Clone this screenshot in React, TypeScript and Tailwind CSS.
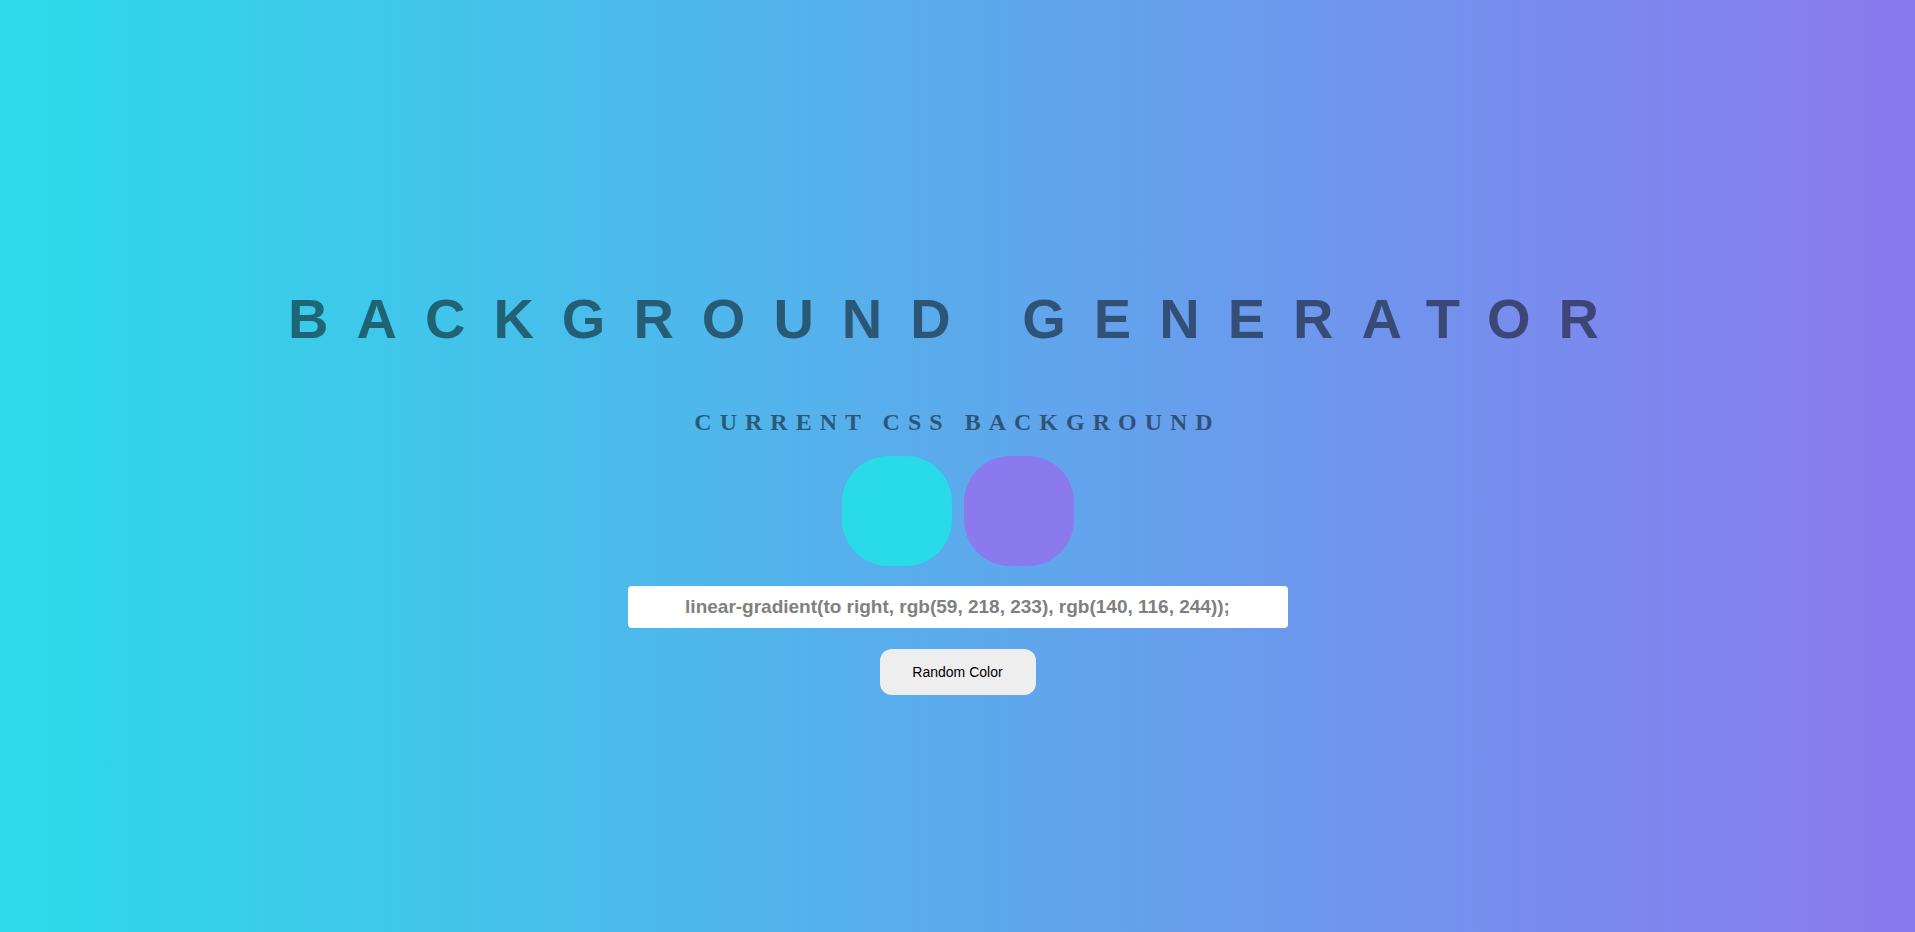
const swatches = ["#29dae8", "#8a7aee"]

const App = () => {
  return (
    <div className="flex h-[932px] w-full flex-col items-center bg-[linear-gradient(to_right,#2cdbe9,#8b79ef)] pt-[287px] font-['Liberation_Sans',Arial,sans-serif]">
      <h1 className="text-[56px] font-bold leading-[64px] tracking-[28px] text-black/50">
        BACKGROUND GENERATOR
      </h1>

      <h3 className="mt-[57px] font-['Liberation_Serif','Times_New_Roman',serif] text-[24px] font-bold leading-[28px] tracking-[8px] text-black/50">
        CURRENT CSS BACKGROUND
      </h3>

      <div className="mt-[20px] flex gap-[12px]">
        {swatches.map((color) => (
          <div
            key={color}
            className="h-[110px] w-[110px] rounded-[42%]"
            style={{ backgroundColor: color }}
          />
        ))}
      </div>

      <div className="mt-[20px] flex h-[42px] w-[660px] items-center justify-center rounded-[4px] bg-white">
        <span className="text-[19px] font-bold text-[#808080]">
          linear-gradient(to right, rgb(59, 218, 233), rgb(140, 116, 244));
        </span>
      </div>

      <button className="mt-[21px] flex h-[46px] w-[156px] items-center justify-center rounded-[12px] bg-[#eeeeee] text-[14px] text-black">
        Random Color
      </button>
    </div>
  )
}

export default App
